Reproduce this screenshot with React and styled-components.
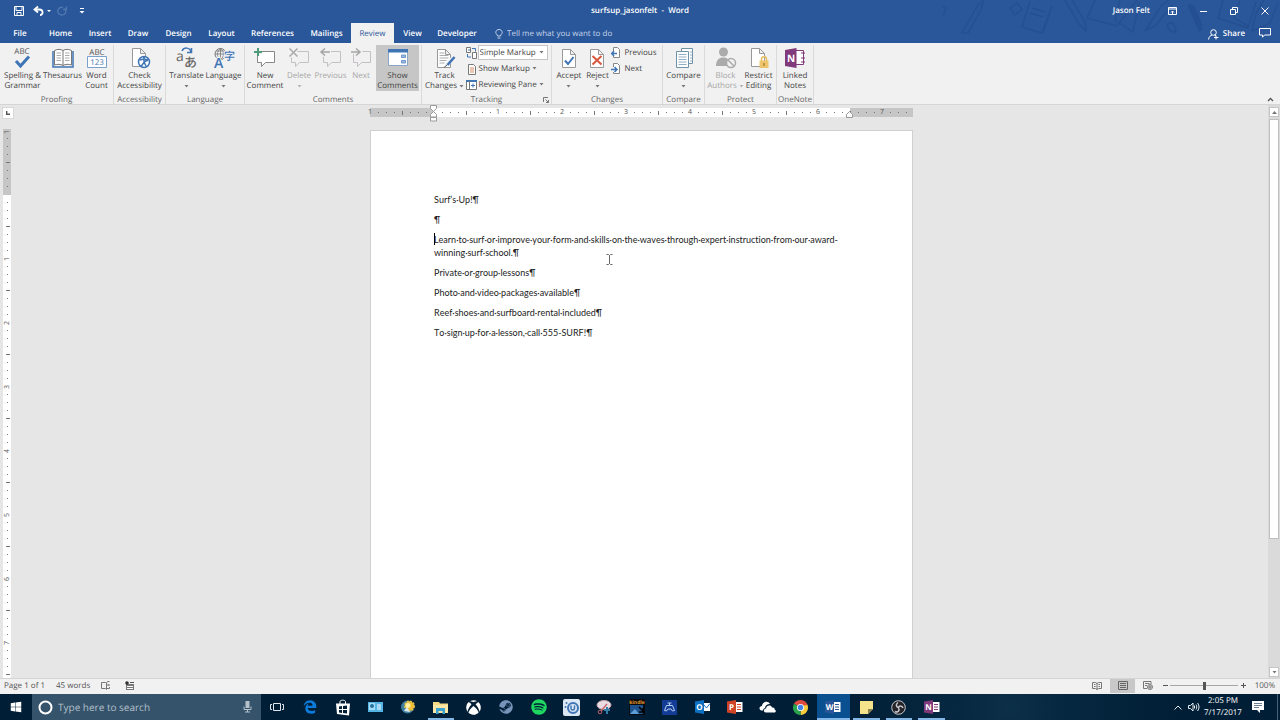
import React, { useState } from 'react';
import styled, { createGlobalStyle } from 'styled-components';
import { FaEdgeLegacy, FaSpotify, FaSteam, FaWindows, FaXbox } from 'react-icons/fa6';

const GlobalStyle = createGlobalStyle`
  * {
    box-sizing: border-box;
  }

  body {
    margin: 0;
    overflow: hidden;
    background: #e6e6e6;
    color: #444;
    font: 8px/10px 'Open Sans', 'Noto Sans', sans-serif;
    text-rendering: geometricPrecision;
  }

  button, input, select {
    margin: 0;
    padding: 0;
    border: 0;
    background: none;
    color: inherit;
    font: inherit;
    text-rendering: inherit;
  }

  svg {
    display: block;
    flex: none;
    overflow: visible;
  }
`;

const blue = '#2a579a';
const line = '#777';
const accent = '#3f74b5';

const Window = styled.div`
  display: flex;
  flex-direction: column;
  height: 100vh;
`;

/* header */

const Header = styled.header`
  position: relative;
  flex: none;
  background: ${blue};
  color: #fff;
`;

const Doodles = styled.svg`
  position: absolute;
  top: 0;
  right: 0;
`;

const TitleBar = styled.div`
  position: relative;
  display: grid;
  grid-template-columns: 1fr auto 1fr;
  align-items: center;
  height: 22px;
`;

const QuickAccess = styled.div`
  display: flex;
  align-items: center;
  gap: 5px;
  padding-left: 13px;
`;

const Title = styled.h1`
  margin: 0;
  font-size: 8px;
  font-weight: 600;
  white-space: pre;
`;

const WindowControls = styled.div`
  display: flex;
  align-items: center;
  justify-content: flex-end;
`;

const UserName = styled.span`
  margin-right: 6px;
  font-weight: 600;
`;

const IconButton = styled.button`
  display: flex;
  align-items: center;
  justify-content: center;
  width: ${props => props.$width || 12}px;
  height: ${props => props.$height || 14}px;
  background: ${props => (props.$active ? '#c8c8c8' : 'none')};
`;

const TabRow = styled.nav`
  position: relative;
  display: flex;
  align-items: center;
  height: 21px;
  padding-top: 1px;
`;

const Tab = styled.button`
  width: ${props => props.$width}px;
  height: 20px;
  padding-top: 2px;
  background: ${props => (props.$active ? '#f1f1f1' : 'none')};
  color: ${props => (props.$active ? blue : '#fff')};
  font-weight: ${props => (props.$active ? 400 : 600)};
  white-space: nowrap;
`;

const TellMe = styled.label`
  display: flex;
  flex: 1;
  align-items: center;
  gap: 4px;
  padding: 2px 0 0 12px;

  input {
    width: 160px;
    outline: none;
  }

  input::placeholder {
    color: #c3d3ea;
    opacity: 1;
  }
`;

const ShareButton = styled.button`
  display: flex;
  align-items: center;
  gap: 4px;
  margin-right: 5px;
  padding-top: 2px;
  font-weight: 600;
`;

/* ribbon */

const Ribbon = styled.div`
  display: flex;
  flex: none;
  height: 62px;
  padding-top: 2px;
  border-bottom: 1px solid #d5d5d5;
  background: #f1f1f1;
`;

const Group = styled.section`
  position: relative;
  display: flex;
  flex-direction: column;
  flex: none;
  width: ${props => props.$width}px;
  border-right: 1px solid #dadada;
`;

const GroupBody = styled.div`
  display: flex;
  justify-content: center;
  height: 47px;
`;

const GroupLabel = styled.h2`
  margin: auto 0 0;
  color: #666;
  font-size: 8px;
  font-weight: 400;
  line-height: 9px;
  text-align: center;
`;

const Launcher = styled.button`
  position: absolute;
  right: 2px;
  bottom: 1px;
`;

const BigButton = styled.button`
  display: flex;
  flex-direction: column;
  flex: none;
  align-items: center;
  width: ${props => props.$width}px;
  height: 46px;
  padding-top: 3px;
  background: ${props => (props.$active ? '#c6c6c6' : 'none')};
  color: ${props => (props.$muted ? '#a6a6a6' : '#444')};

  & > svg {
    margin-bottom: 2px;
  }
`;

const ButtonLine = styled.span`
  display: flex;
  align-items: center;
  justify-content: center;
  gap: 2px;
  height: 10px;
  line-height: 12px;
  white-space: nowrap;
`;

const SmallColumn = styled.div`
  display: flex;
  flex-direction: column;
  gap: 1px;
  padding-left: ${props => props.$before || 0}px;
  padding-right: ${props => props.$after || 0}px;
`;

const SmallRow = styled.div`
  display: flex;
  align-items: center;
  gap: 1px;
  height: 15px;
`;

const SmallButton = styled.button`
  display: flex;
  align-items: center;
  gap: 2px;
  height: 15px;
  line-height: 12px;
  white-space: nowrap;
`;

const SelectBox = styled.label`
  display: flex;
  align-items: center;
  width: 70px;
  height: 15px;
  padding: 0 3px 0 1px;
  border: 1px solid #c6c6c6;
  background: #fff;

  select {
    flex: 1;
    min-width: 0;
    appearance: none;
    outline: none;
  }
`;

const Collapse = styled.button`
  align-self: flex-end;
  margin: 0 6px 0 auto;
  padding-bottom: 2px;
`;

/* document area */

const Workspace = styled.main`
  display: grid;
  flex: 1;
  grid-template-columns: 15px 1fr 12px;
  min-height: 0;
`;

const LeftGutter = styled.div`
  display: flex;
  flex-direction: column;
  gap: 10px;
  min-height: 0;
  overflow: hidden;
`;

const TabStop = styled.button`
  display: flex;
  flex: none;
  align-items: center;
  justify-content: center;
  width: 12px;
  height: 12px;
  margin: 2px 0 0 2px;
  border: 1px solid #d8d8d8;
  background: #fff;
`;

const VerticalRuler = styled.div`
  flex: 1;
  width: 8px;
  min-height: 0;
  margin-left: 3px;
  background: linear-gradient(#c6c6c6 66px, #fff 66px);
`;

const VerticalCell = styled.span`
  display: flex;
  align-items: center;
  justify-content: center;
  height: 8px;
  padding-top: 1px;
  color: #555;
  font-size: 7px;
  line-height: 8px;
  transform: rotate(-90deg);

  &:first-child {
    height: 6px;
  }
`;

const Canvas = styled.div`
  display: flex;
  flex-direction: column;
  align-items: center;
  min-width: 0;
  min-height: 0;
  padding-top: 3px;
  overflow: hidden;
`;

const Ruler = styled.div`
  position: relative;
  display: flex;
  flex: none;
  width: 543px;
  height: 9px;
  margin-bottom: 13px;
  background: linear-gradient(90deg, #c6c6c6 64px, #fff 64px, #fff 480px, #c6c6c6 480px);
`;

const RulerCells = styled.div`
  display: flex;
  margin-left: -4px;
`;

const RulerCell = styled.span`
  display: flex;
  align-items: center;
  justify-content: center;
  width: 8px;
  height: 9px;
  color: #555;
  font-size: 7px;
  line-height: 10px;
`;

const Mark = styled.i`
  width: 1px;
  height: ${props => (props.$long ? 4 : 1)}px;
  background: #777;
`;

const Marker = styled.svg`
  position: absolute;
  top: ${props => props.$top}px;
  left: ${props => props.$left}px;
`;

const Page = styled.article`
  position: relative;
  flex: 1;
  width: 543px;
  padding: 62px 63px 0;
  border: 1px solid #d0d0d0;
  border-bottom: 0;
  background: #fff;
  color: #222;
  font: 9px/13px Lato, 'Open Sans', sans-serif;
  font-kerning: none;
  font-variant-ligatures: none;
  text-rendering: auto;
`;

const Paragraph = styled.p`
  margin: 0 0 7px;
`;

const Caret = styled.span`
  position: absolute;
  width: 1px;
  height: 12px;
  background: #000;
`;

const Pointer = styled.svg`
  position: absolute;
  top: 123px;
  left: 235px;
`;

const ScrollBar = styled.div`
  display: flex;
  flex-direction: column;
  gap: 2px;
  padding: 2px 1px 1px;
  background: #dadada;
`;

const ScrollButton = styled.button`
  display: flex;
  align-items: center;
  justify-content: center;
  height: 10px;
  border: 1px solid #c6c6c6;
  background: #fff;
`;

const ScrollTrack = styled.div`
  flex: 1;
`;

const ScrollThumb = styled.div`
  height: 77%;
  border: 1px solid #c0c0c0;
  background: #fff;
`;

/* status bar */

const StatusBar = styled.footer`
  display: flex;
  flex: none;
  align-items: center;
  height: 16px;
  padding: 0 5px 2px 4px;
  border-top: 1px solid #d5d5d5;
  background: #f1f1f1;
  color: #555;
`;

const StatusText = styled.span`
  margin-right: 11px;
  line-height: 12px;
`;

const StatusRight = styled.div`
  display: flex;
  align-items: center;
  margin-left: auto;
`;

const ZoomSlider = styled.input`
  width: 68px;
  height: 10px;
  appearance: none;
  background: linear-gradient(#a6a6a6, #a6a6a6) center / 100% 1px no-repeat;

  &::-webkit-slider-thumb {
    width: 3px;
    height: 8px;
    appearance: none;
    background: #555;
  }
`;

const ZoomValue = styled.span`
  width: 27px;
  line-height: 12px;
  text-align: right;
`;

/* taskbar */

const Taskbar = styled.footer`
  display: flex;
  flex: none;
  align-items: stretch;
  height: 26px;
  background: radial-gradient(circle at 1010px 14px, #0d3049 0, #062840 50px, #001e36 180px);
  color: #fff;
`;

const StartButton = styled.button`
  display: flex;
  align-items: center;
  justify-content: center;
  width: 32px;
`;

const SearchBox = styled.label`
  display: flex;
  align-items: center;
  gap: 5px;
  width: 229px;
  padding: 0 9px 0 6px;
  background: #35536a;

  input {
    flex: 1;
    min-width: 0;
    outline: none;
    font-size: 10px;
    line-height: 14px;
  }

  input::placeholder {
    color: #b4c0ca;
    opacity: 1;
  }
`;

const AppList = styled.div`
  display: grid;
  grid-template-columns: repeat(21, 1fr);
  width: 687px;
`;

const AppButton = styled.button`
  display: flex;
  align-items: center;
  justify-content: center;
  margin: 0 ${props => (props.$open && !props.$active ? 3 : 0)}px;
  padding-top: ${props => (props.$open ? 2 : 0)}px;
  border-bottom: ${props => (props.$open ? '2px solid #84b6e6' : '0')};
  background: ${props => (props.$active ? '#0a4f8f' : 'none')};
`;

const Tray = styled.div`
  display: flex;
  align-items: center;
  margin-left: auto;
  padding-right: 2px;
`;

const Clock = styled.time`
  width: 40px;
  margin: 0 9px 0 1px;
  line-height: 12px;
  text-align: center;
`;

const ShowDesktop = styled.button`
  height: 26px;
  margin-left: 13px;
  border-left: 1px solid #4a6276;
`;

/* icons */

const Arrow = ({ color = '#777', up }) => (
  <svg width='5' height='3'><path d={up ? 'M0 3h5L2.500 0z' : 'M.5 0h4L2.500 2.500z'} fill={color} /></svg>
);

const Icon = ({ w = 22, h = 21, children }) => (
  <svg width={w} height={h} viewBox={`0 0 ${w} ${h}`} fill='none' stroke={line} strokeWidth='1'>{children}</svg>
);

const sheet = 'M.5.5h8l5 5v13H.5zM8.500.5v5h5';

const icons = {
  spelling: (
    <Icon>
      <text x='10' y='6' fontSize='8' textAnchor='middle' fill='#555' stroke='none'>ABC</text>
      <path d='M4 13l4.500 5L17 8.500' stroke={accent} strokeWidth='3' />
    </Icon>
  ),
  thesaurus: (
    <Icon>
      <path d='M1 3v16h20V3' stroke={accent} strokeWidth='1.500' />
      <path d='M2.500 2.500c3-1.500 6-1.500 8.500 0 2.500-1.500 5.500-1.500 8.500 0v14.500c-3-1-6-1-8.500.5-2.500-1.500-5.500-1.500-8.500-.5zM11 2.500v15' fill='#fff' />
      <path d='M4.500 5h4.500M4.500 7.500h4.500M4.500 10h4.500M4.500 12.500h4.500M13 5h4.500M13 7.500h4.500M13 10h4.500M13 12.500h4.500' stroke='#aaa' />
    </Icon>
  ),
  count: (
    <Icon>
      <text x='11' y='7' fontSize='8' textAnchor='middle' fill='#555' stroke='none'>ABC</text>
      <path d='M1.500 8.500h19v11h-19z' fill='#fff' stroke='#7ba0cd' />
      <text x='11' y='17' fontSize='8' textAnchor='middle' fill={accent} stroke='none'>123</text>
    </Icon>
  ),
  check: (
    <Icon>
      <path transform='translate(3)' d={sheet} fill='#fff' stroke='#999' />
      <circle cx='15' cy='14' r='5.500' fill='#fff' stroke={accent} strokeWidth='1.500' />
      <path d='M11 12l4-1 4 1M15 10.500v4l-3 4M15 14l4-2M15 14l2 4' stroke={accent} strokeWidth='1.500' />
      <circle cx='15' cy='9.500' r='1.200' fill={accent} stroke='none' />
    </Icon>
  ),
  translate: (
    <Icon>
      <path d='M6 3c2-4 8-4 9 1M15.500 0v4.500h-4.500' stroke={accent} strokeWidth='1.500' />
      <text x='0' y='13' fontSize='14' fill='#666' stroke='none'>a</text>
      <text x='8' y='19' fontSize='13' fontFamily='Noto Sans CJK JP' fontWeight='500' fill='#666' stroke='none'>あ</text>
    </Icon>
  ),
  language: (
    <Icon>
      <circle cx='7.500' cy='6' r='5.500' />
      <path d='M2 6h11M7.500.5v11M7.500.5c-4 3-4 8 0 11M7.500.5c4 3 4 8 0 11M3 3h9' strokeWidth='.8' />
      <text x='1' y='19.500' fontSize='14' fontWeight='600' fill={accent} stroke='#f1f1f1' strokeWidth='2' paintOrder='stroke'>A</text>
      <text x='11' y='12' fontSize='11' fontFamily='Noto Sans CJK JP' fontWeight='500' fill={accent} stroke='#f1f1f1' strokeWidth='2' paintOrder='stroke'>字</text>
    </Icon>
  ),
  newComment: (
    <Icon>
      <path d='M3.500 3.500h17v11h-9l-4 4v-4h-4z' fill='#fff' stroke='#888' />
      <path d='M4 0v8M0 4h8' stroke='#f1f1f1' strokeWidth='4' />
      <path d='M4 0v8M0 4h8' stroke='#4f9a78' strokeWidth='2' />
    </Icon>
  ),
  delComment: (
    <Icon>
      <path d='M3.500 3.500h17v11h-9l-4 4v-4h-4z' stroke='#c5bfc6' />
      <path d='M1.500.5l8 8M9.500.5l-8 8' stroke='#f1f1f1' strokeWidth='4' />
      <path d='M1.500.5l8 8M9.500.5l-8 8' stroke='#aaa' strokeWidth='1.500' />
    </Icon>
  ),
  prevComment: (
    <Icon>
      <path d='M3.500 3.500h17v11h-9l-4 4v-4h-4z' stroke='#c5bfc6' />
      <path d='M1 4h10M5 .5l-4 3.500 4 3.500' stroke='#f1f1f1' strokeWidth='4' />
      <path d='M1 4h9M5 .5l-4 3.500 4 3.500' stroke='#a5a5a5' strokeWidth='1.500' />
    </Icon>
  ),
  nextComment: (
    <Icon>
      <path d='M3.500 3.500h17v11h-9l-4 4v-4h-4z' stroke='#c5bfc6' />
      <path d='M0 4h10M6 .5l4 3.500-4 3.500' stroke='#f1f1f1' strokeWidth='4' />
      <path d='M1 4h9M6 .5l4 3.500-4 3.500' stroke='#a5a5a5' strokeWidth='1.500' />
    </Icon>
  ),
  showComments: (
    <Icon>
      <path d='M1.500 2.500h19v15h-19z' fill='#fff' stroke='#8aa6c8' />
      <path d='M1 1h20v3.500H1z' fill={accent} stroke='none' />
      <path d='M14.500 7h4v2.500h-4zM14.500 12.500h4v2.500h-4z' fill='#9dbbe0' stroke='#6d97cb' />
    </Icon>
  ),
  track: (
    <Icon>
      <path transform='translate(3 1)' d={sheet} fill='#fff' stroke='#999' />
      <path d='M5.500 5h5M5.500 7.500h9M5.500 10h9M5.500 12.500h7M5.500 15h5' stroke='#aaa' />
      <path d='M20 9l-8 8.500' stroke='#f1f1f1' strokeWidth='4' />
      <path d='M20.500 9l-7 8' stroke={accent} strokeWidth='2.500' />
      <path d='M13 17l-3 2.500' stroke='#555' />
    </Icon>
  ),
  accept: (
    <Icon>
      <path transform='translate(4 1)' d={sheet} fill='#fff' stroke='#999' />
      <path d='M7 12.500l3 3.500 5.500-7' stroke={accent} strokeWidth='2' />
    </Icon>
  ),
  reject: (
    <Icon>
      <path transform='translate(4 1)' d={sheet} fill='#fff' stroke='#999' />
      <path d='M6.500 8l9 8.500M15.500 8l-9 8.500' stroke='#d9573c' strokeWidth='2' />
    </Icon>
  ),
  compare: (
    <Icon>
      <path d='M8.500.5h11v15h-11z' fill='#fff' stroke='#6f93a8' />
      <path d='M3.500 3.500h12v16h-12z' fill='#fff' stroke='#6f93a8' />
      <path d='M5.500 6.500h8M5.500 9h8M5.500 11.500h8M5.500 14h8M5.500 16.500h8M17 4h2M17 7h2M17 10h2M17 13h2' stroke='#90afc4' />
    </Icon>
  ),
  block: (
    <Icon>
      <circle cx='8.500' cy='4' r='4.500' fill='#ababab' stroke='none' />
      <path d='M1 18c0-6 3-8.500 7.500-8.500s5 2 6 8.500z' fill='#ababab' stroke='none' />
      <circle cx='16' cy='15' r='4.500' fill='#f1f1f1' stroke='#ababab' strokeWidth='1.500' />
      <path d='M13 12l6 6' stroke='#ababab' strokeWidth='1.500' />
    </Icon>
  ),
  restrict: (
    <Icon>
      <path transform='translate(3)' d={sheet} fill='#fff' stroke='#999' />
      <path d='M13.500 13v-2c0-3 5-3 5 0v2' stroke='#e8bd62' strokeWidth='1.500' />
      <path d='M11.500 12.500h9v7.500h-9z' fill='#edc36c' stroke='none' />
      <path d='M16 15v3' stroke='#8a6a20' />
    </Icon>
  ),
  linked: (
    <Icon>
      <path d='M10.500 2.500h9v14h-9' fill='#fff' stroke='#80397b' />
      <path d='M17 5h4M17 10h4M17 14h4' stroke='#80397b' />
      <path d='M1 2L12.500 0v20L1 18z' fill='#80397b' stroke='none' />
      <text x='7' y='14' fontSize='10' fontWeight='700' textAnchor='middle' fill='#fff' stroke='none'>N</text>
    </Icon>
  ),
  display: (
    <Icon w={11} h={12}>
      <path d='M.5.5h4v5h-4zM6.500 5.500h4v6h-4z' fill='#fff' />
      <path d='M6 1.500h3.500v3M1.500 7v3h3.500M2 3h2' stroke={accent} />
    </Icon>
  ),
  markup: (
    <Icon w={11} h={12}>
      <path d='M2.500 1.500h5l2 2v8h-7z' fill='#fff' />
      <path d='M4 5h4M4 7h4M4 9h4' stroke='#d98a63' />
    </Icon>
  ),
  pane: (
    <Icon w={11} h={12}>
      <path d='M.5 1.500h10v9H.5z' fill='#fff' />
      <path d='M0 2h11' stroke={accent} strokeWidth='2' />
      <path d='M3.500 2v8' />
      <path d='M5 6.500h4M7 4.500v4' stroke={accent} />
    </Icon>
  ),
  previous: (
    <Icon w={11} h={12}>
      <path d='M2.500 4V.5h4l2 2v8h-6V9' fill='#fff' stroke='#888' />
      <path d='M0 6.500h6M3 4L.8 6.500 3 9' stroke={accent} strokeWidth='1.500' />
    </Icon>
  ),
  next: (
    <Icon w={11} h={12}>
      <path d='M2.500 4V.5h4l2 2v8h-6V9' fill='#fff' stroke='#888' />
      <path d='M0 6.500h6M3.500 4L6 6.500 3.500 9' stroke={accent} strokeWidth='1.500' />
    </Icon>
  )
};

const OfficeLogo = ({ letter, color }) => (
  <svg width='16' height='14' viewBox='0 0 16 14'>
    <path d='M8 2h7.500v10H8z' fill='#fff' />
    <path d='M10 4.500h4M10 7h4M10 9.500h4' stroke={color} />
    <path d='M0 1.500L9 0v14L0 12.500z' fill={color} />
    <text x='4.500' y='10' fontSize='8' fontWeight='700' textAnchor='middle' fill='#fff'>{letter}</text>
  </svg>
);

const apps = [
  { name: 'Task View', icon: <svg width='14' height='10' fill='none' stroke='#dfe5ea'><path d='M3.500 1.500h7v7h-7zM2 2.500H.5v5H2M12 2.500h1.500v5H12' /></svg> },
  { name: 'Edge', icon: <FaEdgeLegacy size={14} color='#0b7bdc' /> },
  {
    name: 'Store',
    icon: (
      <svg width='16' height='17' viewBox='0 0 16 17'>
        <path d='M5 5V2.500C5 1 10 .5 10.500 2.500V5' fill='none' stroke='#fff' />
        <path d='M1 4.500h14l-1 12L2 15z' fill='#fff' />
        <path d='M4 7.500l3-.5v3H4zM8 7l4-.5V10H8zM4 11h3v3l-3-.5zM8 11h4v3.500L8 14z' fill='#001e36' />
      </svg>
    )
  },
  { name: 'Contacts', icon: <svg width='15' height='12'><path d='M0 1h15v10H0z' fill='#54b4e4' /><path d='M1 2h6v7H1z' fill='#a5ddf5' /><circle cx='4' cy='5' r='2' fill='#27719f' /><path d='M9 4h4M9 6h4M9 8h4' stroke='#fff' /></svg> },
  { name: 'Weather', icon: <svg width='14' height='14'><circle cx='6.500' cy='7' r='6.500' fill='#3d7da0' /><circle cx='8.500' cy='6' r='4.500' fill='#f1bd32' stroke='#e5c04a' strokeWidth='2' strokeDasharray='2 1' /><circle cx='7' cy='5.500' r='2.500' fill='#fff1a0' /><path d='M3 11l3-4 3 5z' fill='#d8eaf2' /></svg> },
  { name: 'File Explorer', open: true, icon: <svg width='15' height='13'><path d='M0 1h6l1 1.500h8V12H0z' fill='#f5d985' /><path d='M0 4h15v8H0z' fill='#fae7a5' /><path d='M3 7h9v6H9.500v-3h-4v3H3z' fill='#3ca2cf' /></svg> },
  { name: 'Xbox', icon: <FaXbox size={15} /> },
  { name: 'Steam', icon: <FaSteam size={14} color='#7894ba' /> },
  { name: 'Spotify', icon: <FaSpotify size={16} color='#1ed760' /> },
  { name: 'uTorrent', icon: <svg width='17' height='17'><rect width='17' height='17' rx='2' fill='#dbe7f2' /><circle cx='10' cy='9' r='5' fill='none' stroke='#3f75b5' strokeWidth='2' /><path d='M8 6.500v3c0 2 3.500 2 3.500 0v-3' fill='none' stroke='#3f75b5' strokeWidth='1.500' /><circle cx='3.500' cy='4' r='1' fill='#3f75b5' /><circle cx='2.500' cy='8' r='1' fill='#3f75b5' /></svg> },
  { name: 'Snipping Tool', icon: <svg width='16' height='15' fill='none'><ellipse cx='8' cy='5' rx='7' ry='4.500' fill='#e9dde3' stroke='#c6a2ac' /><path d='M5 11l6-7' stroke='#c4606b' strokeWidth='1.300' /><circle cx='4' cy='12' r='1.800' stroke='#c4606b' /><path d='M11 7v7M8 10h6' stroke='#317da5' strokeWidth='2' /></svg> },
  { name: 'Kindle', icon: <svg width='16' height='16'><path d='M0 0h16v16H0z' fill='#070b10' /><path d='M1 6h13v9H1z' fill='#1e538e' /><path d='M1 15l5-5 4 5z' fill='#5d9fd6' /><path d='M10 8l4 4M14 9v4h-4' stroke='#000' strokeWidth='1.500' fill='none' /><text x='8' y='5' fontSize='5' fontWeight='700' textAnchor='middle' fill='#e79b2b'>kindle</text></svg> },
  { name: 'Remote Play', icon: <svg width='15' height='15'><rect width='15' height='15' rx='1' fill='#123c96' /><path d='M4.500 5.500h6l2 5-2 .5-1.500-2H6L4.500 11l-2-.5zM7.500 3v2.500M5.500 3h4' fill='none' stroke='#b9d0f0' /></svg> },
  { name: 'Outlook', icon: <svg width='15' height='14' viewBox='0 0 15 14'><path d='M8 3h7v8H8z' fill='#fff' /><path d='M9 5l2.500 3L15 3.500' fill='none' stroke='#0e6fbe' /><path d='M0 1.500L9 0v14L0 12.500z' fill='#0e70c0' /><text x='4.500' y='10' fontSize='8' fontWeight='700' textAnchor='middle' fill='#fff'>O</text></svg> },
  { name: 'PowerPoint', icon: <OfficeLogo letter='P' color='#cf4426' /> },
  { name: 'OneDrive', icon: <svg width='18' height='12'><path d='M4 9.500H2.500C-.5 9 0 5 3 5c0-4 6-6 8-2-3 0-5 2-5 4-1.500.5-2 1.500-2 2.500z' fill='#fff' /><path d='M7 11.500c-3 0-2.500-4 0-4C7.500 4 12 3.500 13 6.500c2-.5 3 1 2.500 2 2 .5 1.500 3 0 3z' fill='#fff' /></svg> },
  {
    name: 'Chrome',
    icon: (
      <svg width='15' height='15' viewBox='0 0 16 16'>
        <path d='M8 8L1.070 4A8 8 0 0 1 14.930 4z' fill='#dd4b3e' />
        <path d='M8 8l6.930-4A8 8 0 0 1 8 16z' fill='#f7cb3a' />
        <path d='M8 8v8A8 8 0 0 1 1.070 4z' fill='#2ba24c' />
        <path d='M8 4h6.930v1.500H8z' fill='#dd4b3e' />
        <circle cx='8' cy='8' r='3.800' fill='#fff' /><circle cx='8' cy='8' r='2.900' fill='#4384e8' />
      </svg>
    )
  },
  { name: 'Word', open: true, active: true, icon: <OfficeLogo letter='W' color='#2b579a' /> },
  { name: 'Sticky Notes', open: true, icon: <svg width='13' height='13'><path d='M0 0h13v8l-5 5H0z' fill='#f4e38a' /><path d='M8 13V8h5z' fill='#8a8050' /></svg> },
  { name: 'OBS', open: true, icon: <svg width='15' height='15' fill='none' stroke='#c9c9cc'><circle cx='7.500' cy='7.500' r='6.800' fill='#252428' /><path d='M7 2.500c-3 2-1.500 5 1 5M12 8c-1-3-4-2.500-4.500-.5M4 11.500c3 1.500 5-1 3.500-3.500' strokeWidth='1.500' /></svg> },
  { name: 'OneNote', open: true, icon: <OfficeLogo letter='N' color='#80397b' /> }
];

const tabs = [
  ['File', 40], ['Home', 41], ['Insert', 38], ['Draw', 38], ['Design', 43], ['Layout', 43],
  ['References', 59], ['Mailings', 49], ['Review', 43], ['View', 37], ['Developer', 52]
];

const groups = [
  { name: 'Proofing', width: 114, tools: [['spelling', 40, 'Spelling &', 'Grammar'], ['thesaurus', 40, 'Thesaurus'], ['count', 28, 'Word', 'Count']] },
  { name: 'Accessibility', width: 52, tools: [['check', 48, 'Check', 'Accessibility']] },
  { name: 'Language', width: 79, tools: [['translate', 37, 'Translate', '', 'menu'], ['language', 37, 'Language', '', 'menu']] },
  { name: 'Comments', width: 177, tools: [['newComment', 36, 'New', 'Comment'], ['delComment', 32, 'Delete', '', 'menu muted'], ['prevComment', 31, 'Previous', '', 'muted'], ['nextComment', 30, 'Next', '', 'muted'], ['showComments', 43, 'Show', 'Comments', 'active']] },
  { name: 'Tracking', width: 130, tools: [['track', 38, 'Track', 'Changes', 'menu']] },
  { name: 'Changes', width: 111, tools: [['accept', 29, 'Accept', '', 'menu'], ['reject', 28, 'Reject', '', 'menu']] },
  { name: 'Compare', width: 42, tools: [['compare', 40, 'Compare', '', 'menu']] },
  { name: 'Protect', width: 72, tools: [['block', 36, 'Block', 'Authors', 'menu muted'], ['restrict', 30, 'Restrict', 'Editing']] },
  { name: 'OneNote', width: 37, tools: [['linked', 34, 'Linked', 'Notes']] }
];

const paragraphs = [
  'Surf’s·Up!',
  '',
  'Learn·to·surf·or·improve·your·form·and·skills·on·the·waves·through·expert·instruction·from·our·award-winning·surf·school.',
  'Private·or·group·lessons',
  'Photo·and·video·packages·available',
  'Reef·shoes·and·surfboard·rental·included',
  'To·sign·up·for·a·lesson,·call·555-SURF!'
];

function Tool ({ tool }) {
  const [icon, width, first, second, flags = ''] = tool;
  const muted = flags.includes('muted');

  return (
    <BigButton $width={width} $muted={muted} $active={flags.includes('active')}>
      {icons[icon]}
      <ButtonLine>{first}</ButtonLine>
      <ButtonLine>
        {second}
        {flags.includes('menu') && <Arrow color={muted ? '#b5b5b5' : '#777'} />}
      </ButtonLine>
    </BigButton>
  );
}

function TrackingTools () {
  return (
    <SmallColumn $before={2}>
      <SmallRow>
        {icons.display}
        <SelectBox>
          <select aria-label='Display for Review'>
            <option>Simple Markup</option>
            <option>All Markup</option>
            <option>No Markup</option>
          </select>
          <Arrow />
        </SelectBox>
      </SmallRow>
      <SmallButton>{icons.markup}Show Markup<Arrow /></SmallButton>
      <SmallButton>{icons.pane}Reviewing Pane<Arrow /></SmallButton>
    </SmallColumn>
  );
}

function ChangesTools () {
  return (
    <SmallColumn $after={3}>
      <SmallButton>{icons.previous}Previous</SmallButton>
      <SmallButton>{icons.next}Next</SmallButton>
    </SmallColumn>
  );
}

function TopBar () {
  const [active, setActive] = useState('Review');

  return (
    <Header>
      <Doodles width='340' height='43' fill='none' stroke='#1d4684' strokeWidth='1.500' opacity='.4' aria-hidden='true'>
        <path d='M2 6l4 2-3 8M22 33l16-28 5-4-1 7-14 25zM70 8l7-5 5 6-7 6zM90 1l-8 26 20 6 10-27M92 8l13 4M90 13l13 4M112 5l-9 28M125 0l14 24 7 7-1-9L132 0M155 0l-8 18 30 8 20-26M180 0l-5 20 18 12 6-30M205 31l16-25 10-8M205 31l11-6 16-20M228 24c4-4 8 2 8 8-6 0-10-4-8-8zM283 0l-5 18 30 10 8-26M300 0l-6 18 14 8M312 31l4-18 8-13M312 31l18-8 8-20' />
        <path d='M249 4l12 27M252 5l9 22' strokeWidth='4' />
      </Doodles>
      <TitleBar>
        <QuickAccess>
          <IconButton aria-label='Save'>
            <svg width='10' height='10' fill='none' stroke='#fff'><path d='M.5.5h9v9h-9z' /><path d='M2 1v3.500h6V1M3 9V6.500h4V9' /></svg>
          </IconButton>
          <IconButton $width={24} aria-label='Undo'>
            <svg width='18' height='10' fill='none' stroke='#fff'><path d='M1.500 3.500h5c4 0 4 5.500.5 5.500M5 .5l-3.500 3L5 6.500' strokeWidth='1.800' /><path d='M14 4h4l-2 2z' fill='#fff' stroke='none' /></svg>
          </IconButton>
          <IconButton $width={6} aria-label='Redo'>
            <svg width='10' height='10' fill='none' stroke='#5077b0'><path d='M6 1.500C2.500.5.8 3 .8 5.300c0 5 8 5 8-.3 0-1-.5-2-1.300-2.500M9.500.5v3H6' strokeWidth='1.300' /></svg>
          </IconButton>
          <IconButton $width={24} aria-label='Customize Quick Access Toolbar'>
            <svg width='6' height='6'><path d='M1 .5h4' stroke='#fff' /><path d='M.5 3h5L3 5.500z' fill='#fff' /></svg>
          </IconButton>
        </QuickAccess>
        <Title>surfsup_jasonfelt  -  Word</Title>
        <WindowControls>
          <UserName>Jason Felt</UserName>
          <IconButton $width={32} aria-label='Ribbon Display Options'>
            <svg width='9' height='8' fill='none' stroke='#fff'><path d='M.5.5h8v7h-8zM0 2h9M4.500 7V4M3 5.500L4.500 4 6 5.500' /></svg>
          </IconButton>
          <IconButton $width={30} aria-label='Minimize'>
            <svg width='7' height='1'><path d='M0 .5h7' stroke='#fff' /></svg>
          </IconButton>
          <IconButton $width={31} aria-label='Restore'>
            <svg width='8' height='8' fill='none' stroke='#fff'><path d='M.5 2.500h5v5h-5zM2.500 2V.5h5v5H6' /></svg>
          </IconButton>
          <IconButton $width={31} aria-label='Close'>
            <svg width='8' height='8' stroke='#fff'><path d='M.5.5l7 7M7.500.5l-7 7' /></svg>
          </IconButton>
        </WindowControls>
      </TitleBar>
      <TabRow>
        {tabs.map(([name, width]) => (
          <Tab key={name} $width={width} $active={active === name} onClick={() => setActive(name)}>{name}</Tab>
        ))}
        <TellMe>
          <svg width='8' height='10' fill='none' stroke='#c3d3ea'><path d='M2.500 7C2.500 5.500.8 5 .8 3.500c0-4 6.400-4 6.400 0C7.200 5 5.500 5.500 5.500 7zM2.500 9h3' /></svg>
          <input placeholder='Tell me what you want to do' aria-label='Tell me what you want to do' />
        </TellMe>
        <ShareButton>
          <svg width='11' height='11' fill='none' stroke='#fff'><circle cx='5.500' cy='3.500' r='2.800' /><path d='M.5 10.500c.5-3 2-4 3.500-4.500M6.500 6l1.500.8M8 6.500v4M6 8.500h4.500' /></svg>
          Share
        </ShareButton>
        <IconButton $width={30} aria-label='Comments'>
          <svg width='12' height='10' fill='none' stroke='#fff'><path d='M.5.5h11v6.500H5.500l-2 2.200V7h-3z' /></svg>
        </IconButton>
      </TabRow>
    </Header>
  );
}

function RibbonBar () {
  return (
    <Ribbon>
      {groups.map(group => (
        <Group key={group.name} $width={group.width}>
          <GroupBody>
            {group.tools.map(tool => <Tool key={tool[0]} tool={tool} />)}
            {group.name === 'Tracking' && <TrackingTools />}
            {group.name === 'Changes' && <ChangesTools />}
          </GroupBody>
          <GroupLabel>{group.name}</GroupLabel>
          {group.name === 'Tracking' && (
            <Launcher aria-label='Tracking options'>
              <svg width='6' height='6' fill='none' stroke='#777'><path d='M.5 5V.5H5M2.500 2.500l3 3M5.500 3v2.500H3' /></svg>
            </Launcher>
          )}
        </Group>
      ))}
      <Collapse aria-label='Collapse the Ribbon'>
        <svg width='7' height='5' fill='none' stroke='#555'><path d='M1 4l2.500-2.500L6 4' strokeWidth='1.300' /></svg>
      </Collapse>
    </Ribbon>
  );
}

function rulerMark (index) {
  if (index % 8 === 0) {
    return index === 8 ? null : Math.abs(index / 8 - 1);
  }
  return <Mark $long={index % 4 === 0} />;
}

function Document () {
  return (
    <Workspace>
      <LeftGutter>
        <TabStop aria-label='Left Tab'>
          <svg width='4' height='4'><path d='M.7 0v3.300H4' fill='none' stroke='#555' strokeWidth='1.400' /></svg>
        </TabStop>
        <VerticalRuler>
          {Array.from({ length: 69 }, (_, index) => <VerticalCell key={index}>{rulerMark(index)}</VerticalCell>)}
        </VerticalRuler>
      </LeftGutter>
      <Canvas>
        <Ruler>
          <RulerCells>
            {Array.from({ length: 68 }, (_, index) => <RulerCell key={index}>{rulerMark(index)}</RulerCell>)}
          </RulerCells>
          <Marker $top={-3} $left={60} width='7' height='17' fill='#fff' stroke='#999'>
            <path d='M.5.500h6v3l-3 3-3-3zM.5 12V9.500l3-3 3 3V12zM.5 12.500h6v3.500h-6z' />
          </Marker>
          <Marker $top={3} $left={476} width='7' height='7' fill='#fff' stroke='#999'>
            <path d='M.5 6.500v-3l3-3 3 3v3z' />
          </Marker>
        </Ruler>
        <Page>
          {paragraphs.map((text, index) => (
            <Paragraph key={index}>
              {index === 2 && <Caret />}
              {`${text}¶`}
            </Paragraph>
          ))}
          <Pointer width='7' height='11' fill='none' stroke='#666'>
            <path d='M.5.5h2l1 1 1-1h2M3.500 1v9M.5 10.500h2l1-1 1 1h2' />
          </Pointer>
        </Page>
      </Canvas>
      <ScrollBar>
        <ScrollButton aria-label='Scroll up'><Arrow up /></ScrollButton>
        <ScrollTrack><ScrollThumb /></ScrollTrack>
        <ScrollButton aria-label='Scroll down'><Arrow /></ScrollButton>
      </ScrollBar>
    </Workspace>
  );
}

function Status () {
  const [zoom, setZoom] = useState(100);

  return (
    <StatusBar>
      <StatusText>Page 1 of 1</StatusText>
      <StatusText>45 words</StatusText>
      <IconButton $width={10} aria-label='Proofing'>
        <svg width='10' height='9' fill='none' stroke='#777'><path d='M4.500 1.500H.5v6h4l1 1V2l1-1.500h2M4.500 1.500l1 1M6 7.500h2.500V6M6.500 3l2 2M8.500 3l-2 2' /></svg>
      </IconButton>
      <IconButton $width={36} aria-label='Macro recording'>
        <svg width='9' height='9'><path d='M1 3h8v6H1z' fill='#777' /><path d='M2 5.500h6M2 7.500h6' stroke='#fff' /><circle cx='2' cy='2' r='1.800' fill='#333' /><path d='M5 1.500h4' stroke='#555' /></svg>
      </IconButton>
      <StatusRight>
        <IconButton $width={27} aria-label='Read Mode'>
          <svg width='10' height='8' fill='none' stroke='#777'><path d='M.5.5h3l1.500 1 1.500-1h3v6h-3l-1.500 1-1.500-1h-3zM5 1v7M2 2.500h1.500M2 4.500h1.500M6.500 2.500H8M6.500 4.500H8' /></svg>
        </IconButton>
        <IconButton $width={25} $height={14} $active aria-label='Print Layout'>
          <svg width='10' height='9' fill='none' stroke='#666'><path d='M.5.5h9v8h-9zM2 2.500h6M2 4.500h6M2 6.500h6' /></svg>
        </IconButton>
        <IconButton $width={26} aria-label='Web Layout'>
          <svg width='10' height='9' fill='none' stroke='#777'><path d='M8 3V.5H.5v7H4M2 2.500h4.500M2 4.500h2' /><circle cx='7' cy='6' r='2.500' /><path d='M5 6h4M7 4v4' /></svg>
        </IconButton>
        <IconButton $width={9} aria-label='Zoom out'><svg width='5' height='1'><path d='M0 .5h5' stroke='#555' /></svg></IconButton>
        <ZoomSlider type='range' min='10' max='190' value={zoom} onChange={e => setZoom(Number(e.target.value))} aria-label='Zoom' />
        <IconButton $width={10} aria-label='Zoom in'><svg width='5' height='5'><path d='M0 2.500h5M2.500 0v5' stroke='#555' /></svg></IconButton>
        <ZoomValue>{zoom}%</ZoomValue>
      </StatusRight>
    </StatusBar>
  );
}

function WindowsTaskbar () {
  return (
    <Taskbar>
      <StartButton aria-label='Start'><FaWindows size={12} /></StartButton>
      <SearchBox>
        <svg width='15' height='15'><circle cx='7.500' cy='7.500' r='6' fill='none' stroke='#fff' strokeWidth='2' /></svg>
        <input placeholder='Type here to search' aria-label='Type here to search' />
        <svg width='9' height='12' fill='none' stroke='#b4c0ca'><rect x='3' y='.5' width='3' height='6' fill='#b4c0ca' /><path d='M1 5.500v3h7v-3M4.500 8.500V11M2 11h5' /></svg>
      </SearchBox>
      <AppList>
        {apps.map(app => (
          <AppButton key={app.name} aria-label={app.name} $open={app.open} $active={app.active}>{app.icon}</AppButton>
        ))}
      </AppList>
      <Tray>
        <IconButton $width={16} aria-label='Show hidden icons'>
          <svg width='8' height='5' fill='none' stroke='#e5eaee'><path d='M.5 4.500L4 1l3.500 3.500' /></svg>
        </IconButton>
        <IconButton $width={16} aria-label='Volume'>
          <svg width='12' height='10' fill='none' stroke='#e5eaee'><path d='M.5 3.500h2l2.500-2.500v8L2.500 6.500h-2zM6.500 3.500v3M8 2.500c1 1.500 1 3.500 0 5M9.500 1c2 2.500 2 5.500 0 8' /></svg>
        </IconButton>
        <Clock>2:05 PM<br />7/17/2017</Clock>
        <IconButton $width={12} aria-label='Notifications'>
          <svg width='12' height='12'><path d='M0 0h12v9H8v3L5 9H0z' fill='#fff' /><path d='M2 2.500h8M2 4.500h8M2 6.500h5' stroke='#6b7f90' /></svg>
        </IconButton>
        <ShowDesktop aria-label='Show desktop' />
      </Tray>
    </Taskbar>
  );
}

function App () {
  return (
    <Window>
      <GlobalStyle />
      <TopBar />
      <RibbonBar />
      <Document />
      <Status />
      <WindowsTaskbar />
    </Window>
  );
}

export default App;
